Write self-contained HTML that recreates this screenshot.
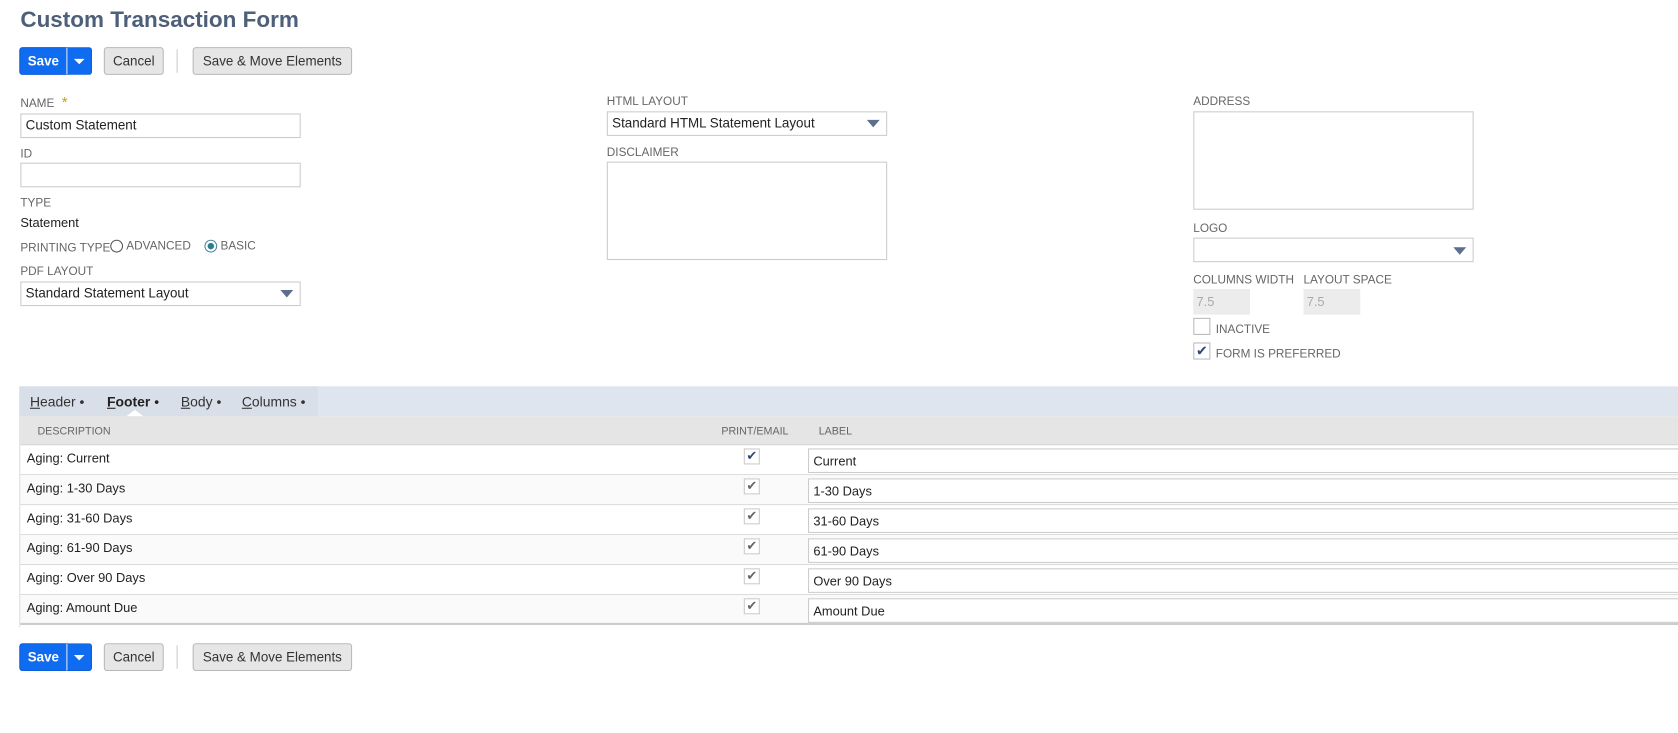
<!DOCTYPE html>
<html><head><style>
*{box-sizing:border-box}
html,body{margin:0;width:1678px;height:733px;overflow:hidden;background:#fff}
#w{position:absolute;left:0;top:0;width:1568px;height:685px;transform:scale(1.0702);transform-origin:0 0;font-family:"Liberation Sans",sans-serif;font-size:13px;color:#222}
.a{position:absolute}
h1{position:absolute;left:19px;top:7px;margin:0;font-size:21px;font-weight:bold;color:#4d5f79}
.btn{position:absolute;height:26px;border-radius:3px;font-size:12.5px;font-weight:bold;line-height:24px;text-align:center}
.save{background:#0f6bf0;color:#fff;border:1px solid #0b5fd6}
.gray{background:#e6e6e6;border:1px solid #b9b9b9;color:#333}
.lbl{position:absolute;font-size:11px;color:#666;text-transform:uppercase}
.inp{position:absolute;height:23px;border:1px solid #ccc;background:#fff;font-size:12.5px;padding:3px 4px;color:#222}
.tri{position:absolute;width:0;height:0;border-left:6px solid transparent;border-right:6px solid transparent;border-top:7px solid #5b6f8f}
.row{position:absolute;left:19px;width:1549px;height:28px;border-bottom:1px solid #dcdcdc}
.row .d{position:absolute;left:6px;top:5px;font-size:12px}
.row .cb{position:absolute;left:676px;top:3px;width:15px;height:15px;border:1px solid #ccc;background:#fff;color:#666;font-size:12px;line-height:13px;text-align:center}
.row .li{position:absolute;left:736px;top:3px;width:830px;height:23px;border:1px solid #ccc;background:#fff;padding:4px 4px;font-size:12px}
</style></head><body><div id="w">
<h1>Custom Transaction Form</h1>

<div class="btn save" style="left:18px;top:44px;width:45px;border-radius:3px 0 0 3px">Save</div>
<div class="btn save" style="left:62px;top:44px;width:24px;border-radius:0 3px 3px 0;border-left:1px solid #fff"><div class="tri" style="left:6px;top:10px;border-top-color:#fff;border-left-width:5px;border-right-width:5px;border-top-width:5px"></div></div>
<div class="btn gray" style="left:97px;top:44px;width:56px;font-weight:normal">Cancel</div>
<div class="a" style="left:165px;top:46px;width:1px;height:22px;background:#ccc"></div>
<div class="btn gray" style="left:180px;top:44px;width:149px;font-weight:normal">Save &amp; Move Elements</div>

<div class="lbl" style="left:19px;top:90px;line-height:14px">Name <span style="color:#c89b2a;font-size:14px;line-height:0">&nbsp;*</span></div>
<div class="inp" style="left:19px;top:106px;width:262px">Custom Statement</div>
<div class="lbl" style="left:19px;top:138px">ID</div>
<div class="inp" style="left:19px;top:152px;width:262px"></div>
<div class="lbl" style="left:19px;top:184px">Type</div>
<div class="a" style="left:19px;top:201px;font-size:12px">Statement</div>
<div class="lbl" style="left:19px;top:226px">Printing Type</div>
<div class="a" style="left:103px;top:224px;width:12px;height:12px;border:1px solid #555;border-radius:50%"></div>
<div class="lbl" style="left:118px;top:224px">Advanced</div>
<div class="a" style="left:191px;top:224px;width:12px;height:12px;border:1px solid #4a8a9a;border-radius:50%;background:#fff"><div class="a" style="left:2px;top:2px;width:6px;height:6px;border-radius:50%;background:#2e7d8e"></div></div>
<div class="lbl" style="left:206px;top:224px">Basic</div>
<div class="lbl" style="left:19px;top:248px">PDF Layout</div>
<div class="inp" style="left:19px;top:263px;width:262px">Standard Statement Layout</div>
<div class="tri" style="left:262px;top:271px"></div>

<div class="lbl" style="left:567px;top:89px">HTML Layout</div>
<div class="inp" style="left:567px;top:104px;width:262px">Standard HTML Statement Layout</div>
<div class="tri" style="left:810px;top:112px"></div>
<div class="lbl" style="left:567px;top:137px">Disclaimer</div>
<div class="inp" style="left:567px;top:151px;width:262px;height:92px"></div>

<div class="lbl" style="left:1115px;top:89px">Address</div>
<div class="inp" style="left:1115px;top:104px;width:262px;height:92px"></div>
<div class="lbl" style="left:1115px;top:208px">Logo</div>
<div class="inp" style="left:1115px;top:222px;width:262px"></div>
<div class="tri" style="left:1358px;top:231px"></div>
<div class="lbl" style="left:1115px;top:256px">Columns Width</div>
<div class="lbl" style="left:1218px;top:256px">Layout Space</div>
<div class="a" style="left:1115px;top:270px;width:53px;height:24px;background:#ececec;color:#aaa;font-size:12px;padding:5px 3px">7.5</div>
<div class="a" style="left:1218px;top:270px;width:53px;height:24px;background:#ececec;color:#aaa;font-size:12px;padding:5px 3px">7.5</div>
<div class="a" style="left:1115px;top:297px;width:16px;height:16px;border:1px solid #bbb"></div>
<div class="lbl" style="left:1136px;top:302px">Inactive</div>
<div class="a" style="left:1115px;top:320px;width:16px;height:16px;border:1px solid #bbb;color:#2b4a7a;font-size:13px;line-height:14px;text-align:center">✔</div>
<div class="lbl" style="left:1136px;top:325px">Form is Preferred</div>

<div class="a" style="left:18px;top:361px;width:1550px;height:28px;background:#dfe5ef"></div>
<div class="a" style="left:18px;top:361px;width:279px;height:28px;background:#d9dfe9"></div>
<div class="a" style="left:28px;top:368px;font-size:13px;color:#333"><u>H</u>eader •</div>
<div class="a" style="left:100px;top:368px;font-size:13px;color:#222;font-weight:bold"><u>F</u>ooter <span style="font-weight:normal">•</span></div>
<div class="a" style="left:118px;top:383px;width:0;height:0;border-left:8px solid transparent;border-right:8px solid transparent;border-bottom:6px solid #fff"></div>
<div class="a" style="left:169px;top:368px;font-size:13px;color:#333"><u>B</u>ody •</div>
<div class="a" style="left:226px;top:368px;font-size:13px;color:#333"><u>C</u>olumns •</div>

<div class="a" style="left:19px;top:389px;width:1549px;height:27px;background:#e5e5e5;border-bottom:1px solid #d5d5d5"></div>
<div class="a" style="left:35px;top:398px;font-size:10px;color:#666">DESCRIPTION</div>
<div class="a" style="left:674px;top:398px;font-size:10px;color:#666">PRINT/EMAIL</div>
<div class="a" style="left:765px;top:398px;font-size:10px;color:#666">LABEL</div>

<div class="row" style="top:416px"><div class="d">Aging: Current</div><div class="cb" style="color:#2b4a7a">✔</div><div class="li">Current</div></div>
<div class="row" style="top:444px;background:#fafafa"><div class="d">Aging: 1-30 Days</div><div class="cb">✔</div><div class="li">1-30 Days</div></div>
<div class="row" style="top:472px"><div class="d">Aging: 31-60 Days</div><div class="cb">✔</div><div class="li">31-60 Days</div></div>
<div class="row" style="top:500px;background:#fafafa"><div class="d">Aging: 61-90 Days</div><div class="cb">✔</div><div class="li">61-90 Days</div></div>
<div class="row" style="top:528px"><div class="d">Aging: Over 90 Days</div><div class="cb">✔</div><div class="li">Over 90 Days</div></div>
<div class="row" style="top:556px;background:#fafafa;border-bottom:2px solid #ccc"><div class="d">Aging: Amount Due</div><div class="cb">✔</div><div class="li">Amount Due</div></div>
<div class="a" style="left:18px;top:389px;width:1px;height:197px;background:#ddd"></div>

<div class="btn save" style="left:18px;top:601px;width:45px;border-radius:3px 0 0 3px">Save</div>
<div class="btn save" style="left:62px;top:601px;width:24px;border-radius:0 3px 3px 0;border-left:1px solid #fff"><div class="tri" style="left:6px;top:10px;border-top-color:#fff;border-left-width:5px;border-right-width:5px;border-top-width:5px"></div></div>
<div class="btn gray" style="left:97px;top:601px;width:56px;font-weight:normal">Cancel</div>
<div class="a" style="left:165px;top:603px;width:1px;height:22px;background:#ccc"></div>
<div class="btn gray" style="left:180px;top:601px;width:149px;font-weight:normal">Save &amp; Move Elements</div>
</div></body></html>
